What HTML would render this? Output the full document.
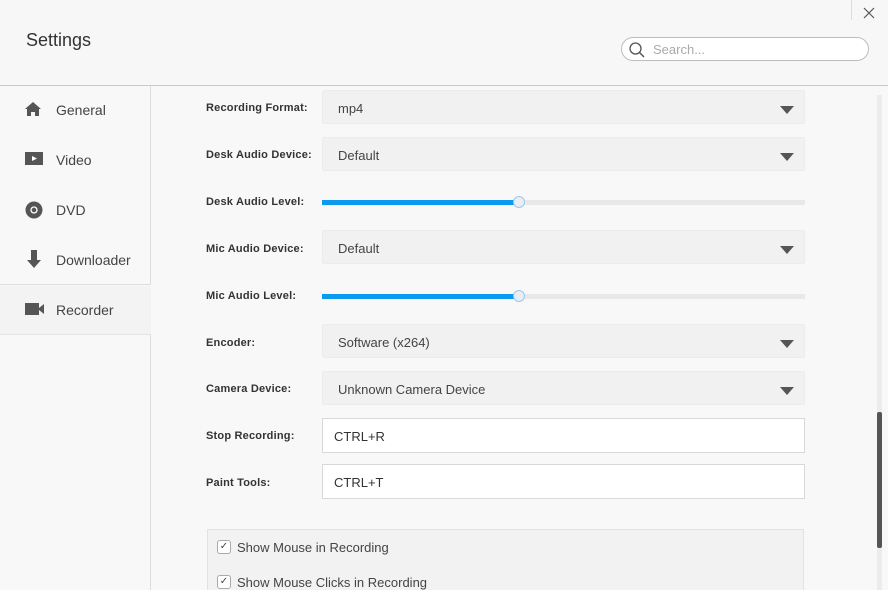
<!DOCTYPE html>
<html><head><style>
*{margin:0;padding:0;box-sizing:border-box}
html,body{width:888px;height:590px;overflow:hidden}
body{background:#f8f8f9;font-family:"Liberation Sans",sans-serif;position:relative;color:#333}
.abs{position:absolute}
.hdr{left:0;top:0;width:888px;height:86px;background:#f7f7f8;border-bottom:1px solid #c9c9c9}
.title{left:26px;top:30px;font-size:18px;color:#333}
.search{left:621px;top:37px;width:248px;height:24px;border:1px solid #bdbdbd;border-radius:12px;background:#fff}
.search span{position:absolute;left:31px;top:4px;font-size:13px;color:#aaa}
.side{left:0;top:86px;width:151px;height:199px;border-right:1px solid #ddd;border-bottom:1px solid #ddd;background:#f8f8f9}
.side2{left:0;top:334px;width:151px;height:260px;border-right:1px solid #ddd;border-top:1px solid #e4e4e4;background:#f8f8f9}
.sel{left:0;top:286px;width:151px;height:48px;background:#f3f3f4}
.item{position:absolute;left:56px;font-size:14px;color:#444}
.lbl{position:absolute;left:206px;font-size:11px;font-weight:bold;color:#333;letter-spacing:0.2px}
.dd{position:absolute;left:322px;width:483px;height:34px;background:#f1f1f2;border:1px solid #ececec;border-radius:2px}
.dd span{position:absolute;left:15px;top:10px;font-size:13px;color:#444}
.dd i{position:absolute;right:10px;top:15px;width:0;height:0;border-left:7px solid transparent;border-right:7px solid transparent;border-top:8px solid #555}
.tx{position:absolute;left:322px;width:483px;height:35px;background:#fff;border:1px solid #d8d8d8}
.tx span{position:absolute;left:11px;top:10px;font-size:13px;color:#333}
.sl{position:absolute;left:322px;width:483px;height:5px;background:#e8e8e8}
.sl b{position:absolute;left:0;top:0;width:197px;height:5px;background:#0b9af0}
.sl u{position:absolute;left:191px;top:-4px;width:12px;height:12px;border-radius:50%;background:#e8eef4;border:1px solid #9cc8ea}
.cb{position:absolute;left:217px;width:14px;height:14px;border:1px solid #aaa;border-radius:3px;background:#fff;font-size:10px;line-height:12px;text-align:center;color:#444}
.ct{position:absolute;left:237px;font-size:13px;color:#444}
</style></head><body>
<div class="abs hdr"></div>
<div class="abs title">Settings</div>
<div class="abs" style="left:851px;top:0;width:1px;height:20px;background:#ddd"></div>
<svg class="abs" style="left:862px;top:6px" width="14" height="14"><path d="M2 2L12 12M12 2L2 12" stroke="#555" stroke-width="1.2"/></svg>
<div class="abs search"><svg style="position:absolute;left:6px;top:3px" width="18" height="18"><circle cx="7.5" cy="7.5" r="5.5" fill="none" stroke="#555" stroke-width="1.3"/><path d="M11.5 11.5L16 16" stroke="#555" stroke-width="1.5"/></svg><span>Search...</span></div>

<div class="abs side"></div>
<div class="abs sel"></div>
<div class="abs side2"></div>
<svg class="abs" style="left:24px;top:101px" width="18" height="16"><path d="M9 1L1 8H3V15H7V11H11V15H15V8H17Z" fill="#555"/></svg>
<div class="item" style="top:102px">General</div>
<svg class="abs" style="left:25px;top:152px" width="18" height="14"><rect width="18" height="13" fill="#555"/><path d="M7 4L12 6.5L7 9Z" fill="#fff"/></svg>
<div class="item" style="top:152px">Video</div>
<svg class="abs" style="left:25px;top:201px" width="18" height="18"><circle cx="9" cy="9" r="8.5" fill="#555"/><circle cx="9" cy="9" r="3" fill="none" stroke="#fff" stroke-width="1.3"/></svg>
<div class="item" style="top:202px">DVD</div>
<svg class="abs" style="left:26px;top:250px" width="16" height="20"><path d="M5 0H11V10H15L8 18L1 10H5Z" fill="#555"/></svg>
<div class="item" style="top:252px">Downloader</div>
<svg class="abs" style="left:25px;top:303px" width="20" height="12"><rect width="14" height="12" fill="#555"/><path d="M14 5L19 1V11L14 7Z" fill="#555"/></svg>
<div class="item" style="top:302px">Recorder</div>

<div class="lbl" style="top:102px">Recording Format:</div>
<div class="dd" style="top:90px"><span>mp4</span><i></i></div>
<div class="lbl" style="top:149px">Desk Audio Device:</div>
<div class="dd" style="top:137px"><span>Default</span><i></i></div>
<div class="lbl" style="top:196px">Desk Audio Level:</div>
<div class="sl" style="top:200px"><b></b><u></u></div>
<div class="lbl" style="top:243px">Mic Audio Device:</div>
<div class="dd" style="top:230px"><span>Default</span><i></i></div>
<div class="lbl" style="top:290px">Mic Audio Level:</div>
<div class="sl" style="top:294px"><b></b><u></u></div>
<div class="lbl" style="top:337px">Encoder:</div>
<div class="dd" style="top:324px"><span>Software (x264)</span><i></i></div>
<div class="lbl" style="top:383px">Camera Device:</div>
<div class="dd" style="top:371px"><span>Unknown Camera Device</span><i></i></div>
<div class="lbl" style="top:430px">Stop Recording:</div>
<div class="tx" style="top:418px"><span>CTRL+R</span></div>
<div class="lbl" style="top:477px">Paint Tools:</div>
<div class="tx" style="top:464px"><span>CTRL+T</span></div>

<div class="abs" style="left:207px;top:529px;width:597px;height:70px;background:#f2f2f3;border:1px solid #e2e2e2"></div>
<div class="cb" style="top:540px">✓</div><div class="ct" style="top:540px">Show Mouse in Recording</div>
<div class="cb" style="top:575px">✓</div><div class="ct" style="top:575px">Show Mouse Clicks in Recording</div>

<div class="abs" style="left:877px;top:95px;width:5px;height:495px;background:#ececec"></div>
<div class="abs" style="left:877px;top:412px;width:5px;height:136px;background:#555;border-radius:2px"></div>
</body></html>
